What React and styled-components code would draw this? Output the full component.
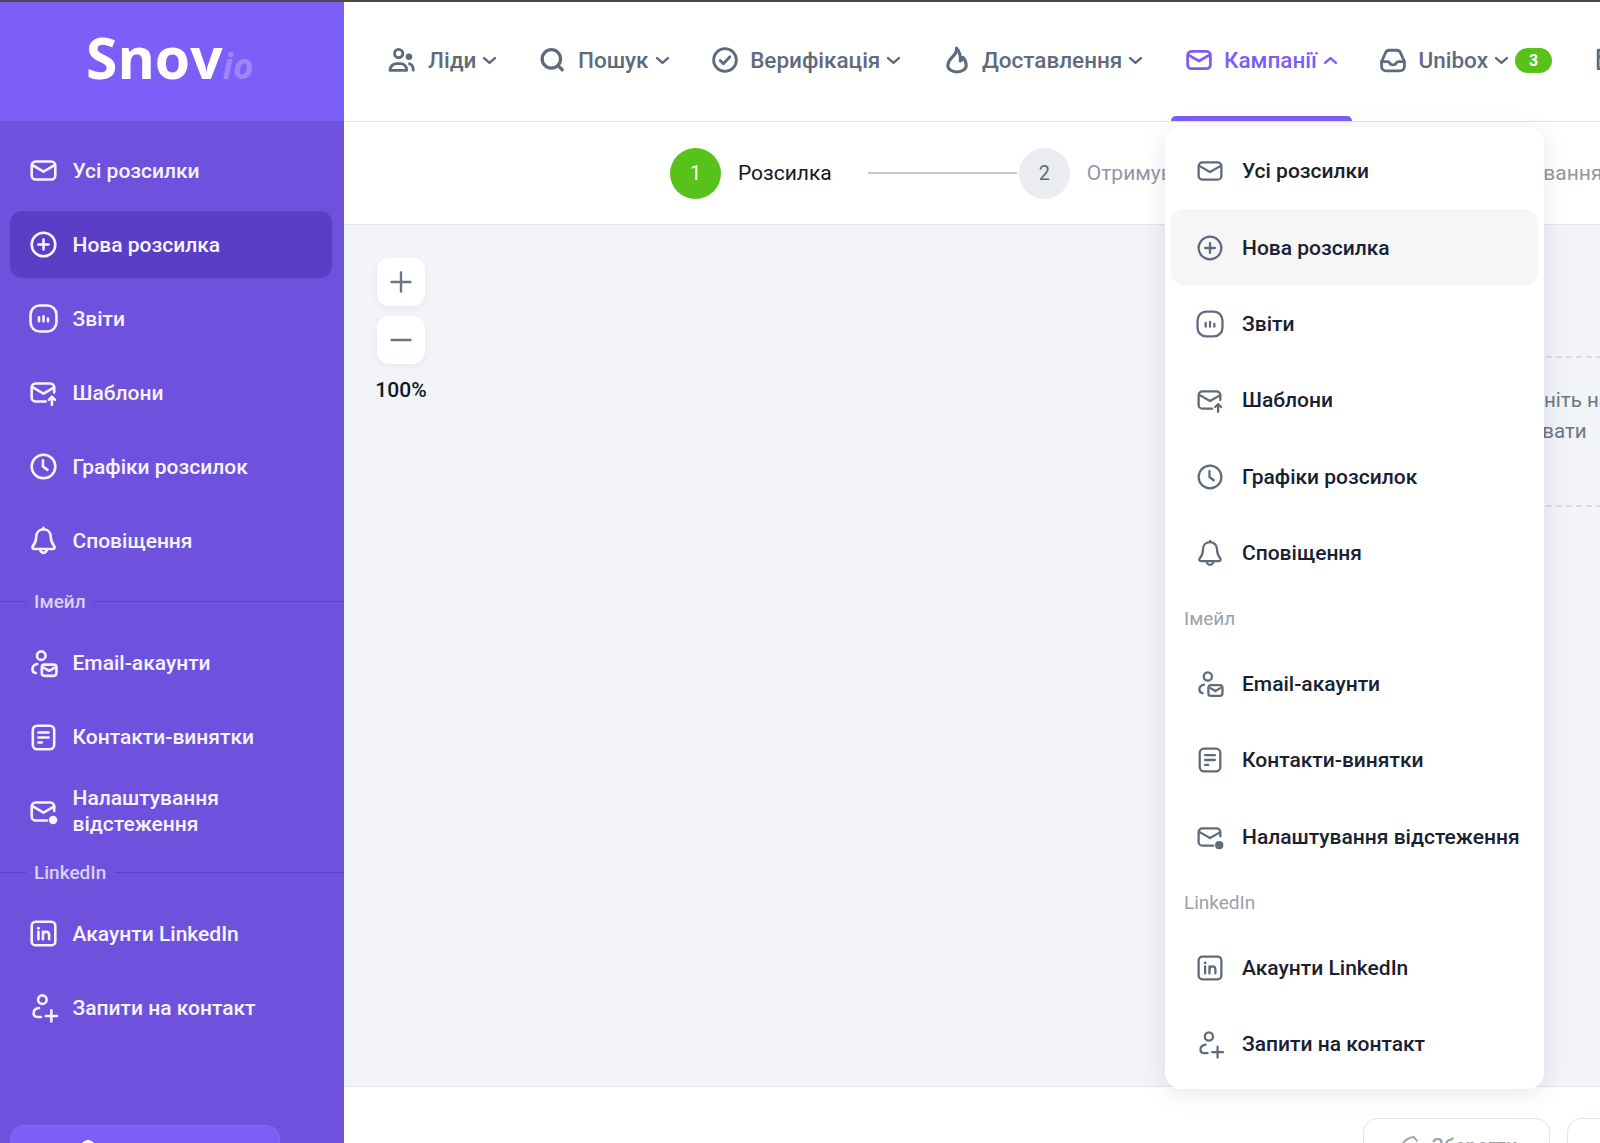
import * as React from 'react';
import styled, { createGlobalStyle, css } from 'styled-components';

const GlobalStyle = createGlobalStyle`
  html, body {
    margin: 0;
    padding: 0;
    height: 100%;
    overflow: hidden;
    background: #fff;
    font-family: Roboto, "Noto Sans", sans-serif;
  }

  * {
    box-sizing: border-box;
  }
`;

const Page = styled.div`
  display: flex;
  width: 1600px;
  height: 1143px;
  overflow: hidden;
  border-top: 2px solid #4a4a4a;
`;

const Sidebar = styled.aside`
  flex: 0 0 344px;
  display: flex;
  flex-direction: column;
  overflow: hidden;
  background: #6e52de;
`;

const LogoBar = styled.div`
  flex: 0 0 119px;
  display: flex;
  align-items: baseline;
  padding: 17px 0 0 86px;
  background: #7c5ef8;
  font-family: "Open Sans", sans-serif;
`;

const LogoMain = styled.span`
  font-size: 57px;
  font-weight: 700;
  line-height: 76px;
  color: #fff;
`;

const LogoSuffix = styled.span`
  font-size: 35px;
  font-weight: 700;
  font-style: italic;
  color: #9d86fb;
`;

const SideNav = styled.nav`
  display: flex;
  flex-direction: column;
  gap: 7px;
  padding-top: 16px;
`;

const SideItem = styled.a`
  display: flex;
  align-items: center;
  gap: 15.5px;
  height: 67px;
  margin: 0 12px 0 10px;
  padding-left: 20px;
  border-radius: 12px;
  font-size: 21px;
  font-weight: 500;
  line-height: 26px;
  color: #f6f4ff;
  background: ${p => (p.$active ? '#5a3fc6' : 'transparent')};
`;

const SideText = styled.span`
  max-width: 190px;
`;

const SideLabel = styled.div`
  display: flex;
  align-items: center;
  gap: 8px;
  height: 41.5px;
  font-size: 19px;
  font-weight: 500;
  color: #d9d0fc;

  &:before,
  &:after {
    content: '';
    height: 1px;
    background: #5a40c6;
  }

  &:before {
    flex: 0 0 26px;
  }

  &:after {
    flex: 1;
  }
`;

const UpgradeBox = styled.div`
  flex-shrink: 0;
  width: 270px;
  height: 70px;
  margin: 84px 0 0 10px;
  padding: 14px 0 0 70px;
  border: 1px solid #846af5;
  border-radius: 14px;
  background: #7c5ef8;
`;

const UpgradeDot = styled.span`
  display: block;
  width: 14px;
  height: 14px;
  border-radius: 50%;
  background: #fff;
`;

const Main = styled.div`
  position: relative;
  flex: 1;
  min-width: 0;
  display: flex;
  flex-direction: column;
`;

const TopBar = styled.header`
  flex: 0 0 120px;
  display: flex;
  align-items: stretch;
  gap: 13.6px;
  padding: 0 0 0 31px;
  overflow: hidden;
  border-bottom: 1px solid #e3e5ea;
`;

const TopItem = styled.a`
  position: relative;
  display: flex;
  align-items: center;
  flex-shrink: 0;
  padding: 0 15px 3px;
  font-size: 22.5px;
  font-weight: 500;
  color: ${p => (p.$active ? '#7b5ef8' : '#5f6b7c')};

  ${p =>
    p.$active &&
    css`
      &:after {
        content: '';
        position: absolute;
        left: 0;
        right: 0;
        bottom: 0;
        height: 5px;
        border-radius: 5px 5px 0 0;
        background: #7b5ef8;
      }
    `}
`;

const TopLabel = styled.span`
  margin: 0 7px 0 12px;
`;

const Badge = styled.span`
  display: flex;
  align-items: center;
  justify-content: center;
  width: 37px;
  height: 25px;
  margin-left: 7px;
  border-radius: 13px;
  font-size: 16px;
  font-weight: 700;
  color: #fff;
  background: #57c31a;
`;

const Steps = styled.div`
  flex: 0 0 103px;
  display: flex;
  align-items: center;
  padding-left: 326px;
  overflow: hidden;
  white-space: nowrap;
  border-bottom: 1px solid #e3e5ea;
`;

const StepCircle = styled.span`
  flex: 0 0 51px;
  display: flex;
  align-items: center;
  justify-content: center;
  height: 51px;
  border-radius: 50%;
  font-size: 20px;
  color: ${p => (p.$current ? '#fff' : '#5f6b7c')};
  background: ${p => (p.$current ? '#57c31a' : '#ebecf1')};
`;

const StepLabel = styled.span`
  margin-left: 17px;
  font-size: 21px;
  color: ${p => (p.$current ? '#111827' : '#8f97a5')};
`;

const StepLine = styled.span`
  flex: 0 0 ${p => p.$width}px;
  height: 2px;
  margin: 0 2px 0 36px;
  background: #c9cbcf;
`;

const Canvas = styled.section`
  position: relative;
  flex: 1;
  overflow: hidden;
  padding: 33px 0 0 30px;
  background: #f2f4f8;
`;

const ZoomControls = styled.div`
  display: flex;
  flex-direction: column;
  align-items: center;
  gap: 10px;
  width: 54px;
`;

const ZoomButton = styled.button`
  display: flex;
  align-items: center;
  justify-content: center;
  width: 48px;
  height: 48px;
  padding: 0;
  border: 0;
  border-radius: 12px;
  color: #6b7585;
  background: #fff;
  box-shadow: 0 2px 6px rgba(60, 70, 100, 0.07);
`;

const ZoomValue = styled.div`
  margin-top: 4px;
  font-size: 21px;
  font-weight: 500;
  color: #101828;
`;

const EmptyNode = styled.div`
  position: absolute;
  left: 830px;
  top: 131px;
  width: 850px;
  height: 151px;
  padding-top: 27px;
  border-top: 2px dashed #d9dbe1;
  border-bottom: 2px dashed #d9dbe1;
  font-size: 20.5px;
  line-height: 31px;
  color: #6b7585;
`;

const EmptyLine = styled.div`
  margin-left: ${p => p.$offset}px;
  white-space: nowrap;
`;

const Footer = styled.footer`
  flex: 0 0 57px;
  display: flex;
  gap: 17px;
  padding: 31px 0 0 1019px;
  overflow: hidden;
  border-top: 1px solid #e3e5ea;
`;

const FooterButton = styled.button`
  flex: 0 0 ${p => p.$width}px;
  display: flex;
  justify-content: center;
  align-items: center;
  gap: 12px;
  height: 56px;
  padding: 0;
  border: 1.5px solid #e0e4eb;
  border-radius: 14px;
  font-family: inherit;
  font-size: 20px;
  font-weight: 500;
  color: #9aa1ad;
  background: #fff;
`;

const Dropdown = styled.div`
  position: absolute;
  left: 821px;
  top: 125px;
  width: 379px;
  height: 962px;
  padding: 6px;
  border-radius: 16px;
  background: #fff;
  box-shadow: 0 4px 24px rgba(50, 60, 90, 0.12);
`;

const DropItem = styled.a`
  display: flex;
  align-items: center;
  gap: 19px;
  height: 76.4px;
  padding-left: 26px;
  border-radius: 14px;
  font-size: 21px;
  font-weight: 500;
  color: #182132;
  white-space: nowrap;
  background: ${p => (p.$active ? '#f6f6f7' : 'transparent')};
`;

const DropIcon = styled.span`
  color: #5f6b7c;
`;

const DropLabel = styled.div`
  display: flex;
  align-items: center;
  height: 54.5px;
  padding-left: 13px;
  font-size: 19px;
  color: #9aa1ad;
`;

const IconSvg = styled.svg`
  flex-shrink: 0;
  display: block;
  width: ${p => p.$size}px;
  height: ${p => p.$size}px;
  overflow: visible;
  fill: none;
  stroke: currentColor;
  stroke-width: ${p => p.$stroke};
  stroke-linecap: round;
  stroke-linejoin: round;
`;

const Solid = styled.circle`
  fill: currentColor;
  stroke: none;
`;

const icons = {
  mail: (
    <>
      <rect x="1.500" y="4" width="21" height="16" rx="3.500" />
      <path d="M2.500 7.500 12 13l9.500-5.500" />
    </>
  ),
  plus: (
    <>
      <circle cx="12" cy="12" r="10.500" />
      <path d="M12 7.500v9M7.500 12h9" />
    </>
  ),
  report: (
    <>
      <rect x="0.500" y="0.500" width="23" height="23" rx="8" />
      <path d="M8 11v3.500M12 10v4.500M16 12v2.500" />
    </>
  ),
  template: (
    <>
      <path d="M21.500 12V7.500A3.500 3.500 0 0 0 18 4H5a3.500 3.500 0 0 0-3.500 3.500v9A3.500 3.500 0 0 0 5 20h9" />
      <path d="M2.500 7.500 12 13l9.500-5.500M19.500 23v-7M16.800 18.500l2.700-2.700 2.700 2.700" />
    </>
  ),
  clock: (
    <>
      <circle cx="12" cy="12" r="10.500" />
      <path d="M11.500 6.500V12l4 3" />
    </>
  ),
  bell: (
    <>
      <path d="M12 2C8 2 5.500 5 5.500 9c0 4-1 5.500-3 8-.8 1-.3 2.500 1.200 2.500h16.600c1.500 0 2-1.500 1.200-2.500-2-2.500-3-4-3-8 0-4-2.500-7-6.500-7Z" />
      <path d="M9 19.500c0 2 1.300 3.500 3 3.500s3-1.500 3-3.500M12 .8V2" />
    </>
  ),
  userMail: (
    <>
      <circle cx="10" cy="5" r="3.800" />
      <path d="M6.500 12.500C3.800 13 2.200 15 2.200 17c0 2 1.300 3.200 3 3.500" />
      <rect x="10.500" y="13" width="13" height="10" rx="2.500" />
      <path d="M12.500 15.800 17 18.500l4.500-2.700" />
    </>
  ),
  doc: (
    <>
      <rect x="2.500" y="1.500" width="19" height="21" rx="4" />
      <path d="M7.500 7.500h9M7.500 12h9M7.500 16.500h3" />
    </>
  ),
  mailDot: (
    <>
      <path d="M21.500 11.500V7.500A3.500 3.500 0 0 0 18 4H5a3.500 3.500 0 0 0-3.500 3.500v9A3.500 3.500 0 0 0 5 20h10" />
      <path d="M2.500 7.500 12 13l9.500-5.500" />
      <Solid cx="20.500" cy="19.500" r="3.800" />
    </>
  ),
  linkedin: (
    <>
      <rect x="1.500" y="1.500" width="21" height="21" rx="3.500" />
      <path d="M7.500 10.500v6.500M11.500 17v-6.500M11.500 13.500c0-1.800 1.300-3 2.800-3s2.700 1 2.700 3V17" />
      <Solid cx="7.500" cy="7.300" r="1.300" />
    </>
  ),
  userPlus: (
    <>
      <circle cx="11" cy="5" r="3.800" />
      <path d="M8 12.500c-3 .5-4.800 2.500-4.800 4.500 0 2 1.500 3.300 3.500 3.500h3M14 19.500h10M19 14.500v10" />
    </>
  ),
  leads: (
    <>
      <circle cx="8" cy="6" r="3.800" />
      <path d="M0 21.500c0-3.800 3-6.200 6.500-6.200h3c3.500 0 6 2.400 6 6.200Z" />
      <Solid cx="17.500" cy="9" r="3" />
      <path d="M18 15.500c2.300.6 3.500 3 3.500 6" />
    </>
  ),
  search: (
    <>
      <circle cx="10.500" cy="11" r="8.500" />
      <path d="m17 17.500 3.500 3.500" />
    </>
  ),
  check: (
    <>
      <circle cx="12" cy="12" r="10.500" />
      <path d="m7.500 12.500 3 3 6-6.500" />
    </>
  ),
  flame: (
    <path d="M11.500 1c1 3.500-1.500 6-4.500 9C4.500 12.500 3.500 14.500 3.500 17c0 3.500 3.800 6 8.500 6s8.500-2.500 8.500-6c0-3-1.300-5.800-3-7.500-.3 1.700-1 3-2.500 3.500.5-4-.5-8.500-3.500-12Z" />
  ),
  inbox: (
    <>
      <path d="M1.500 13.500 5 5.500A4 4 0 0 1 8.500 3h7A4 4 0 0 1 19 5.500l3.500 8V18a4 4 0 0 1-4 4h-13a4 4 0 0 1-4-4Z" />
      <path d="M1.500 13.500H7c1 0 1.500.5 2 1.500s1.500 1.500 3 1.500 2.500-.5 3-1.500 1-1.500 2-1.500h5.500" />
    </>
  ),
  calendar: <path d="M2 3h20M2 3v6h20V3M2 9v11h20V9" />,
  chevronDown: <path d="m2 7.500 10 9 10-9" />,
  chevronUp: <path d="m2 16.500 10-9 10 9" />,
  add: <path d="M12 2.500v19M2.500 12h19" />,
  remove: <path d="M2.500 12h19" />,
  save: <path d="M3 22C3 11 9 4 18 3l3 4" />
};

const Icon = ({ name, size = 27, stroke = 2.3 }) => (
  <IconSvg viewBox="0 0 24 24" $size={size} $stroke={stroke}>
    {icons[name]}
  </IconSvg>
);

const sections = [
  {
    items: [
      { icon: 'mail', text: 'Усі розсилки' },
      { icon: 'plus', text: 'Нова розсилка', active: true },
      { icon: 'report', text: 'Звіти' },
      { icon: 'template', text: 'Шаблони' },
      { icon: 'clock', text: 'Графіки розсилок' },
      { icon: 'bell', text: 'Сповіщення' }
    ]
  },
  {
    label: 'Імейл',
    items: [
      { icon: 'userMail', text: 'Email-акаунти' },
      { icon: 'doc', text: 'Контакти-винятки' },
      { icon: 'mailDot', text: 'Налаштування відстеження' }
    ]
  },
  {
    label: 'LinkedIn',
    items: [
      { icon: 'linkedin', text: 'Акаунти LinkedIn' },
      { icon: 'userPlus', text: 'Запити на контакт' }
    ]
  }
];

const topItems = [
  { icon: 'leads', text: 'Ліди', stroke: 2.6 },
  { icon: 'search', text: 'Пошук', stroke: 3 },
  { icon: 'check', text: 'Верифікація', stroke: 2.6 },
  { icon: 'flame', text: 'Доставлення', stroke: 2.8 },
  { icon: 'mail', text: 'Кампанії', active: true, stroke: 2.6 },
  { icon: 'inbox', text: 'Unibox', badge: 3, stroke: 2.6 }
];

const App = () => (
  <Page>
    <GlobalStyle />
    <Sidebar>
      <LogoBar>
        <LogoMain>Snov</LogoMain>
        <LogoSuffix>io</LogoSuffix>
      </LogoBar>
      <SideNav>
        {sections.map(section => (
          <React.Fragment key={section.label || 'main'}>
            {section.label && <SideLabel>{section.label}</SideLabel>}
            {section.items.map(item => (
              <SideItem key={item.text} $active={item.active}>
                <Icon name={item.icon} />
                <SideText>{item.text}</SideText>
              </SideItem>
            ))}
          </React.Fragment>
        ))}
      </SideNav>
      <UpgradeBox>
        <UpgradeDot />
      </UpgradeBox>
    </Sidebar>
    <Main>
      <TopBar>
        {topItems.map(item => (
          <TopItem key={item.text} $active={item.active}>
            <Icon name={item.icon} size={26} stroke={item.stroke} />
            <TopLabel>{item.text}</TopLabel>
            <Icon
              name={item.active ? 'chevronUp' : 'chevronDown'}
              size={13}
              stroke={4.4}
            />
            {item.badge && <Badge>{item.badge}</Badge>}
          </TopItem>
        ))}
        <TopItem>
          <Icon name="calendar" size={26} stroke={2.6} />
        </TopItem>
      </TopBar>
      <Steps>
        <StepCircle $current>1</StepCircle>
        <StepLabel $current>Розсилка</StepLabel>
        <StepLine $width={149} />
        <StepCircle>2</StepCircle>
        <StepLabel>Отримувачі</StepLabel>
        <StepLine $width={176} />
        <StepCircle>3</StepCircle>
        <StepLabel>Планування</StepLabel>
      </Steps>
      <Canvas>
        <ZoomControls>
          <ZoomButton>
            <Icon name="add" size={24} stroke={2.4} />
          </ZoomButton>
          <ZoomButton>
            <Icon name="remove" size={24} stroke={2.4} />
          </ZoomButton>
          <ZoomValue>100%</ZoomValue>
        </ZoomControls>
        <EmptyNode>
          <EmptyLine $offset={312}>Натисніть на блок, щоб</EmptyLine>
          <EmptyLine $offset={304}>редагувати</EmptyLine>
        </EmptyNode>
      </Canvas>
      <Footer>
        <FooterButton $width={187}>
          <Icon name="save" size={24} stroke={1.8} />
          Зберегти
        </FooterButton>
        <FooterButton $width={120} />
      </Footer>
      <Dropdown>
        {sections.map(section => (
          <React.Fragment key={section.label || 'main'}>
            {section.label && <DropLabel>{section.label}</DropLabel>}
            {section.items.map(item => (
              <DropItem key={item.text} $active={item.active}>
                <DropIcon>
                  <Icon name={item.icon} size={26} stroke={2.1} />
                </DropIcon>
                {item.text}
              </DropItem>
            ))}
          </React.Fragment>
        ))}
      </Dropdown>
    </Main>
  </Page>
);

export default App;
